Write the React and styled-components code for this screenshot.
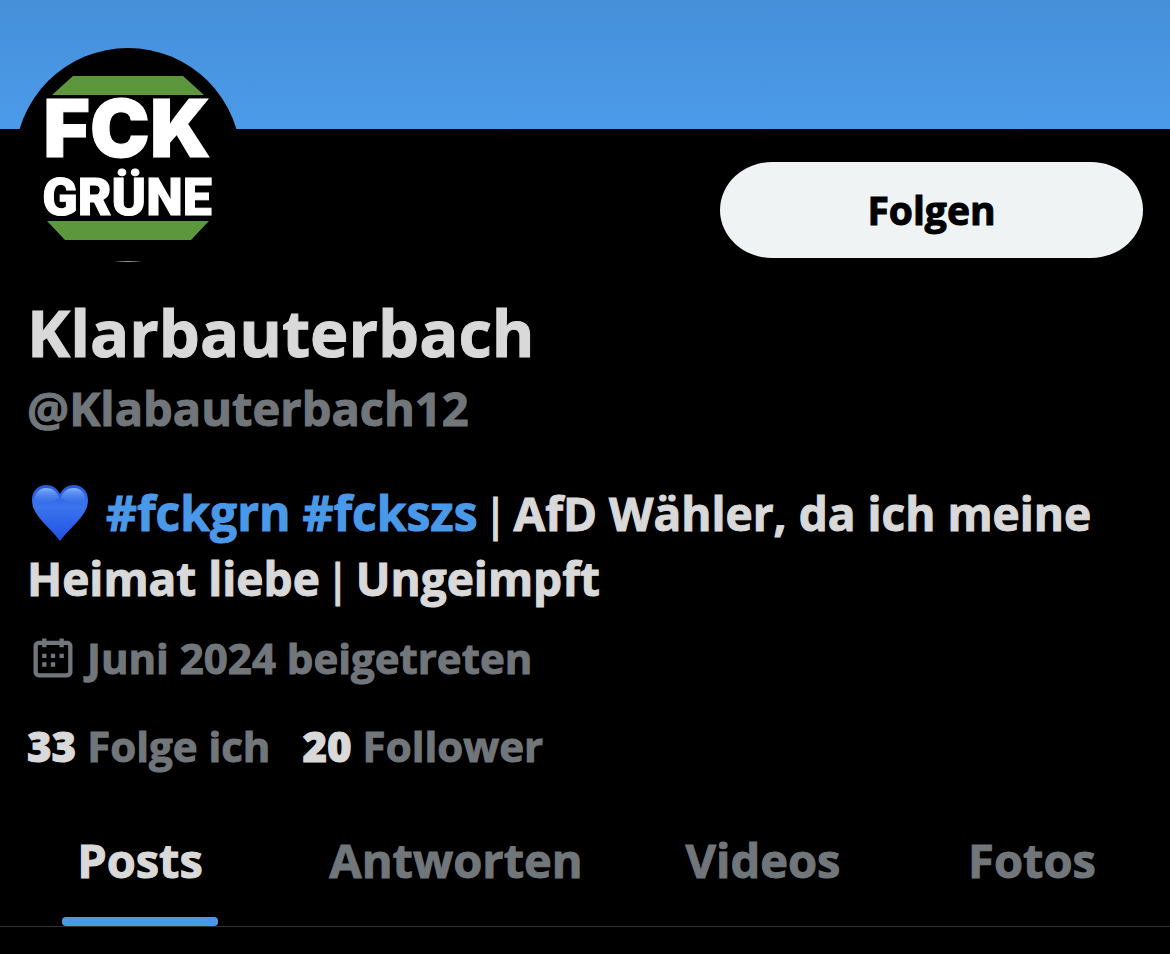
import { useState } from "react";
import styled, { createGlobalStyle } from "styled-components";

const tabs = ["Posts", "Antworten", "Videos", "Fotos"];

const AvatarLogo = () => (
  <svg viewBox="0 0 226 226" role="img" aria-label="FCK GRÜNE">
    <circle cx="113" cy="113" r="113" fill="#000" />
    <polygon points="58,28 168,28 189,47 37,47" fill="#5c973d" />
    <text
      x="112"
      y="109"
      textAnchor="middle"
      fontFamily="Inter, sans-serif"
      fontWeight="900"
      fontSize="80"
      fill="#fff"
      stroke="#fff"
    >
      FCK
    </text>
    <text
      x="112"
      y="167"
      textAnchor="middle"
      fontFamily="Roboto, sans-serif"
      fontWeight="900"
      fontSize="52"
      fill="#fff"
      stroke="#fff"
    >
      GRÜNE
    </text>
    <polygon points="32,173 194,173 176,192 50,192" fill="#5c973d" />
    <path d="M99 213 Q113 214.6 127 213 Z" fill="#cfcfc4" />
  </svg>
);

const BlueHeart = () => (
  <svg viewBox="0 0 56 56" role="img" aria-label="💙">
    <defs>
      <linearGradient id="heartFill" x1="0" y1="0" x2="0" y2="1">
        <stop offset="0" stopColor="#2458d8" />
        <stop offset="0.4" stopColor="#3a74ee" />
        <stop offset="1" stopColor="#1f50e2" />
      </linearGradient>
      <linearGradient id="heartShine" x1="0" y1="0" x2="0" y2="1">
        <stop offset="0" stopColor="#8fbcfb" stopOpacity="0.9" />
        <stop offset="1" stopColor="#4a80f8" stopOpacity="0" />
      </linearGradient>
    </defs>
    <path
      d="M28 9 C25 3 20 0 14 0 C5 0 0 7 0 15 C0 31 17 41 28 56 C39 41 56 31 56 15 C56 7 51 0 42 0 C36 0 31 3 28 9 Z"
      fill="url(#heartFill)"
    />
    <path d="M14 3 C20 3 25 6 27 13 C23 16 10 18 3 20 C1 10 6 3 14 3 Z" fill="url(#heartShine)" />
    <path d="M42 3 C36 3 31 6 29 13 C33 16 46 18 53 20 C55 10 50 3 42 3 Z" fill="url(#heartShine)" />
  </svg>
);

const CalendarIcon = () => (
  <svg viewBox="0 0 24 24" aria-hidden="true">
    <path
      fill="currentColor"
      d="M7 4V3h2v1h6V3h2v1h1.5C19.89 4 21 5.12 21 6.5v12c0 1.38-1.11 2.5-2.5 2.5h-13C4.12 21 3 19.88 3 18.5v-12C3 5.12 4.12 4 5.5 4H7zm0 2H5.5c-.27 0-.5.22-.5.5v12c0 .28.23.5.5.5h13c.28 0 .5-.22.5-.5v-12c0-.28-.22-.5-.5-.5H17v1h-2V6H9v1H7V6zm0 6h2v-2H7v2zm0 4h2v-2H7v2zm4-4h2v-2h-2v2zm0 4h2v-2h-2v2zm4-4h2v-2h-2v2z"
    />
  </svg>
);

export default function App() {
  const [activeTab, setActiveTab] = useState("Posts");

  return (
    <>
      <GlobalStyle />
      <Banner />
      <Profile>
        <TopRow>
          <Avatar>
            <AvatarLogo />
          </Avatar>
          <FollowButton type="button">Folgen</FollowButton>
        </TopRow>
        <Name>Klarbauterbach</Name>
        <Handle>@Klabauterbach12</Handle>
        <Bio>
          <Emoji>
            <BlueHeart />
          </Emoji>
          <Hashtag href="#fckgrn">#fckgrn</Hashtag> <Hashtag href="#fckszs">#fckszs</Hashtag>{" "}
          <Bar>|</Bar> AfD Wähler, da ich meine Heimat liebe <Bar>|</Bar> Ungeimpft
        </Bio>
        <Joined>
          <CalendarIcon />
          <span>Juni 2024 beigetreten</span>
        </Joined>
        <Stats>
          <Stat href="#following">
            <strong>33</strong> Folge ich
          </Stat>
          <Stat href="#followers">
            <strong>20</strong> Follower
          </Stat>
        </Stats>
      </Profile>
      <Tabs role="tablist">
        {tabs.map((tab) => (
          <Tab
            key={tab}
            type="button"
            role="tab"
            aria-selected={tab === activeTab}
            $active={tab === activeTab}
            onClick={() => setActiveTab(tab)}
          >
            <span>{tab}</span>
          </Tab>
        ))}
      </Tabs>
    </>
  );
}

const GlobalStyle = createGlobalStyle`
  * {
    box-sizing: border-box;
  }
  body {
    margin: 0;
    background: #000;
    color: #d9d9d9;
    font-family: "Open Sans", "Noto Sans", sans-serif;
    font-weight: 700;
    -webkit-text-stroke: 1px currentColor;
  }
  button {
    font: inherit;
    border: none;
    cursor: pointer;
  }
  a {
    text-decoration: none;
  }
`;

const Banner = styled.header`
  height: 129px;
  background: linear-gradient(#468fd9, #4b9bea);
`;

const Profile = styled.main`
  padding: 0 27px;
`;

const TopRow = styled.div`
  display: flex;
  justify-content: space-between;
  align-items: flex-start;
  height: 160px;
`;

const Avatar = styled.div`
  width: 226px;
  height: 226px;
  margin: -81px 0 0 -12px;
  -webkit-text-stroke: 0;
  svg {
    display: block;
  }
`;

const FollowButton = styled.button`
  width: 423px;
  height: 96px;
  margin-top: 33px;
  padding: 0 0 2px;
  border-radius: 52px / 48px;
  background: #eff3f4;
  color: #000;
  font-size: 39px;
`;

const Name = styled.h1`
  margin: 0;
  font-size: 65px;
  line-height: 86px;
`;

const Handle = styled.p`
  margin: 0;
  color: #71767b;
  font-size: 47px;
  line-height: 66px;
`;

const Bio = styled.p`
  margin: 40px 0 0;
  font-size: 46px;
  line-height: 65px;
`;

const Emoji = styled.span`
  display: inline-block;
  width: 56px;
  height: 56px;
  margin: 0 18px 0 5px;
  vertical-align: -10px;
  svg {
    display: block;
  }
`;

const Hashtag = styled.a`
  color: #4a99e9;
  font-size: 48px;
  line-height: 1;
`;

const Bar = styled.span`
  font-family: "Liberation Sans", sans-serif;
  font-weight: 400;
  line-height: 1;
`;

const Joined = styled.div`
  display: flex;
  align-items: center;
  gap: 8px;
  margin-top: 17px;
  color: #71767b;
  font-size: 42px;
  line-height: 60px;
  svg {
    width: 52px;
    height: 52px;
  }
`;

const Stats = styled.div`
  display: flex;
  gap: 32px;
  margin-top: 28px;
  font-size: 42px;
  line-height: 60px;
`;

const Stat = styled.a`
  color: #71767b;
  strong {
    color: #d9d9d9;
  }
`;

const Tabs = styled.nav`
  display: grid;
  grid-template-columns: 280fr 352fr 262fr 276fr;
  margin-top: 42px;
  border-bottom: 1px solid #2f3336;
`;

const Tab = styled.button`
  display: flex;
  justify-content: center;
  padding: 0;
  background: none;
  color: ${({ $active }) => ($active ? "#d9d9d9" : "#71767b")};
  font-size: 47px;
  span {
    position: relative;
    padding: 0 15px 24px;
    line-height: 84px;
  }
  span::after {
    content: "";
    display: ${({ $active }) => ($active ? "block" : "none")};
    position: absolute;
    left: 0;
    right: 0;
    bottom: 0;
    height: 9px;
    border-radius: 4px;
    background: #4a99e9;
  }
`;
